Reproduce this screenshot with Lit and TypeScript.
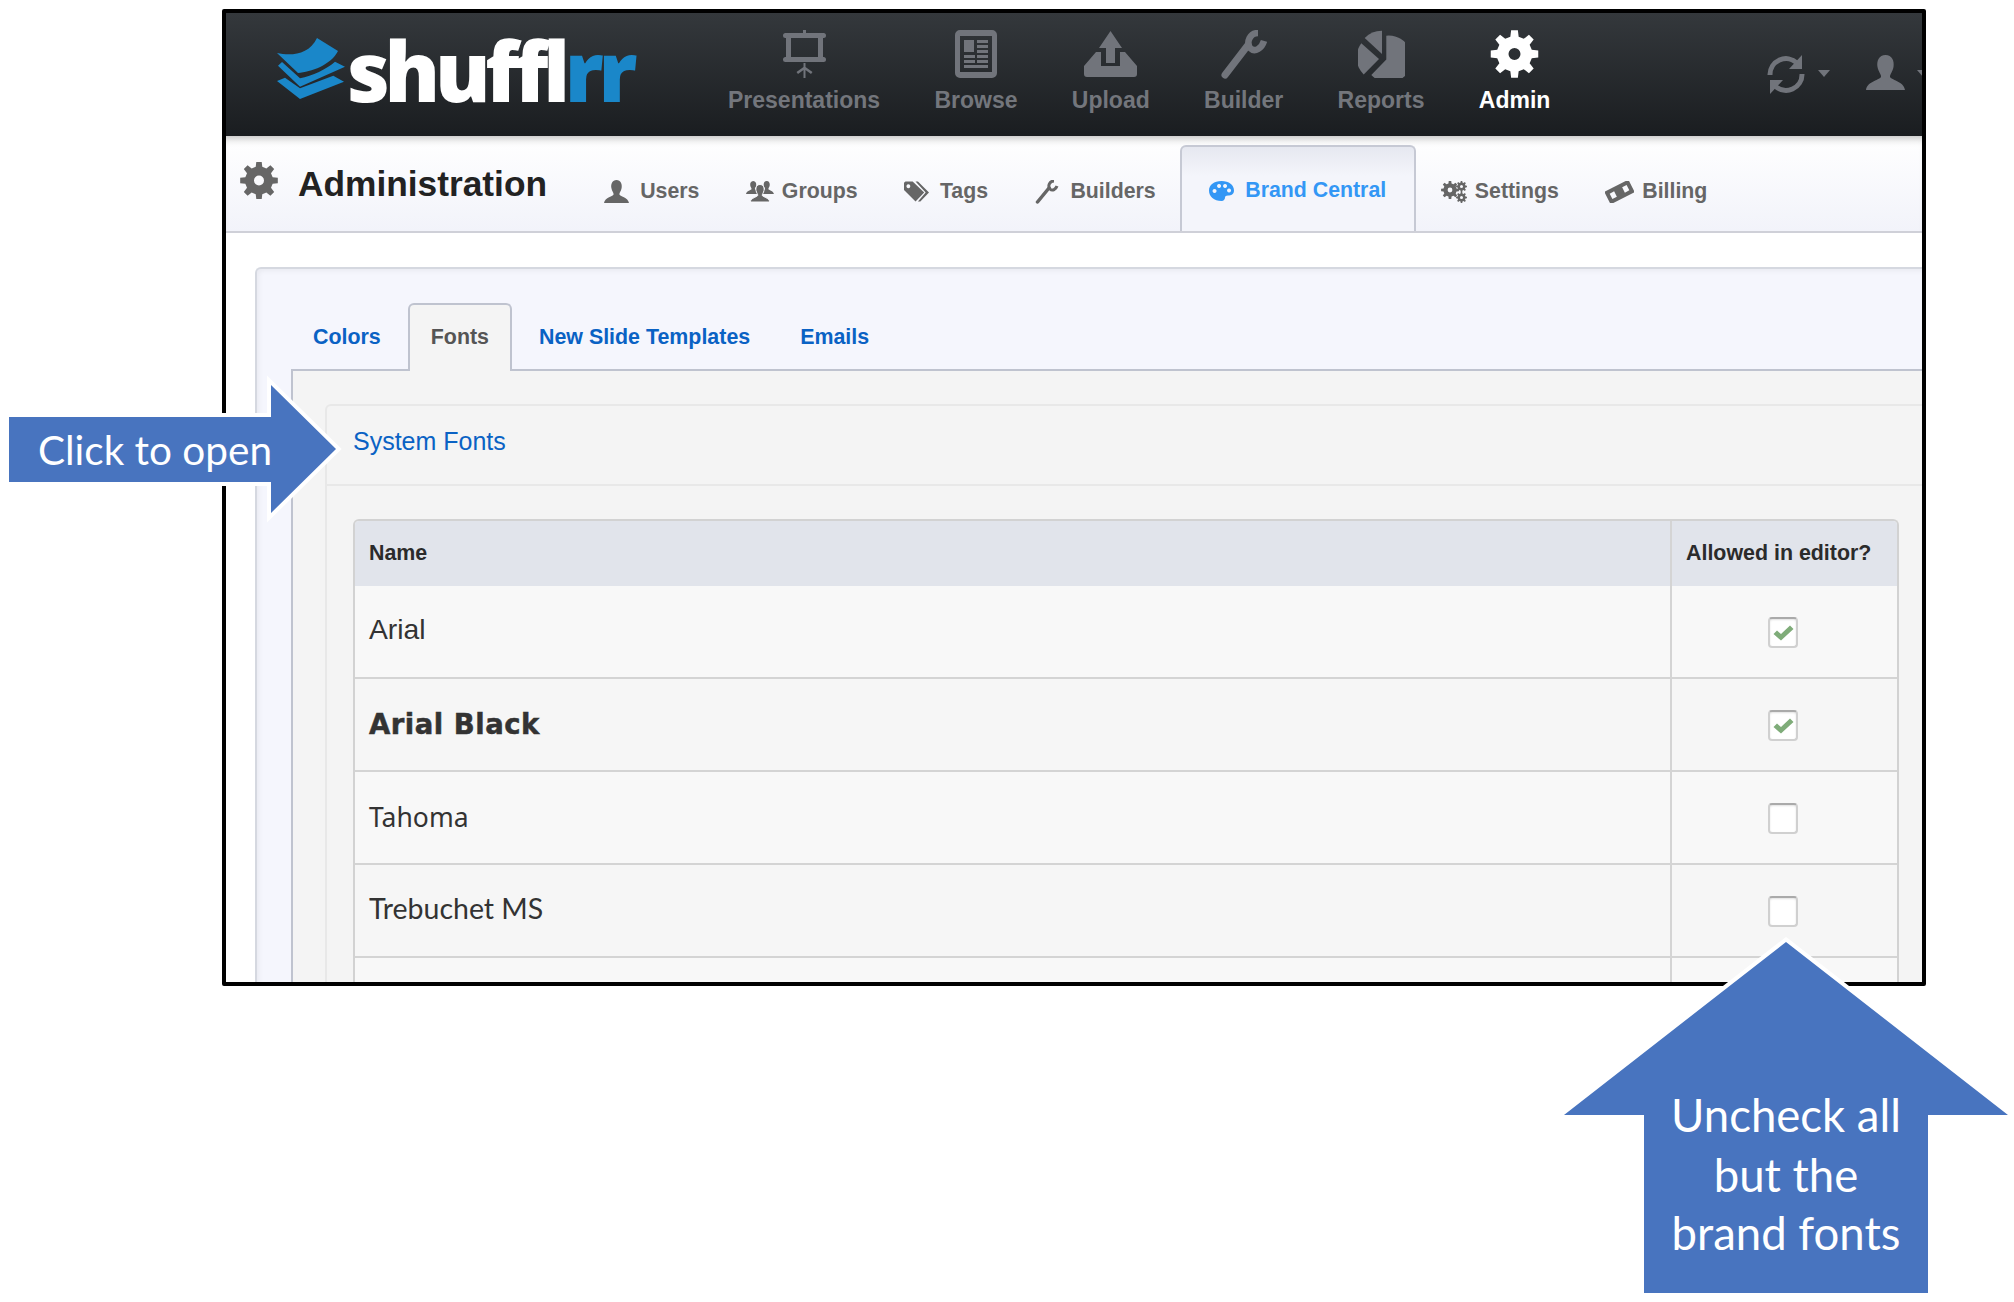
import { LitElement, html, css, svg } from "lit";
import { customElement } from "lit/decorators.js";

function gear(cx: number, cy: number, r: number, hole: number, teeth = 8): string {
  const out: string[] = [];
  const step = (Math.PI * 2) / teeth;
  const root = r * 0.74;
  for (let i = 0; i < teeth; i++) {
    const a = i * step - Math.PI / 2;
    const pts: [number, number][] = [
      [root, a - step * 0.3],
      [r, a - step * 0.18],
      [r, a + step * 0.18],
      [root, a + step * 0.3],
    ];
    for (const [rad, ang] of pts) {
      out.push(`${out.length ? "L" : "M"}${(cx + rad * Math.cos(ang)).toFixed(2)} ${(cy + rad * Math.sin(ang)).toFixed(2)}`);
    }
  }
  out.push("Z");
  out.push(`M${cx - hole} ${cy}a${hole} ${hole} 0 1 0 ${hole * 2} 0a${hole} ${hole} 0 1 0 ${-hole * 2} 0Z`);
  return out.join(" ");
}

const person = "M19.5 0C26 0 28.500 6 27.500 12C26.500 17 24 19 24 21.500C24 25 38 26 39 35H0C1 26 15 25 15 21.500C15 19 12.500 17 11.500 12C10.500 6 13 0 19.500 0Z";

const navIcons: Record<string, unknown> = {
  Presentations: html`<svg width="43" height="48" viewBox="0 0 43 48">
    <rect x="20" y="0" width="3" height="4"></rect>
    <rect x="0" y="3" width="43" height="5" rx="2.500"></rect>
    <path d="M3 7h5v23h27V7h5v23H3z"></path>
    <rect x="0" y="27" width="43" height="5" rx="2.500"></rect>
    <path d="M20.500 33h2l0 4 7 5-1.500 2-5.500-4V48h-2v-8l-5.500 4-1.500-2 7-5z"></path></svg>`,
  Browse: html`<svg width="42" height="48" viewBox="0 0 42 48">
    <path fill-rule="evenodd" d="M5 0h32a5 5 0 0 1 5 5v38a5 5 0 0 1-5 5H5a5 5 0 0 1-5-5V5a5 5 0 0 1 5-5zM5 6v36h32V6z"></path>
    <path d="M9 10h10v12H9zM22 10h11v3H22zM22 15h11v3H22zM22 20h11v3H22zM9 25h11v3H9zM22 25h11v3H22zM9 30h11v3H9zM22 30h11v3H22zM9 35h24v3H9z"></path></svg>`,
  Upload: html`<svg width="53" height="46" viewBox="0 0 53 46">
    <path d="M26.500 0L38 17h-7v15h-9V17h-7z"></path>
    <path d="M12 21h5v14h19V21h5l12 14v8a3 3 0 0 1-3 3H3a3 3 0 0 1-3-3v-8z"></path></svg>`,
  Builder: html`<svg width="47" height="49" viewBox="0 0 47 49">
    <path d="M5 45L28 15" fill="none" stroke="#71747b" stroke-width="7" stroke-linecap="round"></path>
    <path d="M38 3C30 3 26 12 30 18C35 23 42 18 44 11" fill="none" stroke="#71747b" stroke-width="6.500"></path></svg>`,
  Reports: html`<svg width="47" height="48" viewBox="0 0 47 48">
    <path d="M28.300 5.700A23.500 23.500 0 1 1 13.300 45L28.300 29.500z"></path>
    <path d="M24 .7V24L6.700 8A23.500 23.500 0 0 1 24 .7z"></path>
    <path d="M3.300 13.300L21 29 5.700 44.500A23.500 23.500 0 0 1 3.300 13.300z"></path></svg>`,
  Admin: html`<svg width="49" height="48" viewBox="0 0 49 48"><path fill-rule="evenodd" d="${gear(24.5, 24, 24, 6)}"></path></svg>`,
};

const nav = ["Presentations", "Browse", "Upload", "Builder", "Reports", "Admin"];

const subIcons: Record<string, unknown> = {
  Users: html`<svg width="25" height="23" viewBox="0 0 39 35" preserveAspectRatio="none"><path d="${person}"></path></svg>`,
  Groups: html`<svg class="tight" width="28" height="22" viewBox="0 0 56 44">
    <g transform="translate(0 0) scale(.74)"><path d="${person}"></path></g>
    <g transform="translate(27 0) scale(.74)"><path d="${person}"></path></g>
    <g transform="translate(8.500 7)" stroke="#f9f9fd" stroke-width="2"><path d="${person}"></path></g></svg>`,
  Tags: html`<svg width="25" height="22" viewBox="0 0 26 22">
    <path fill-rule="evenodd" d="M0 1.500L1.500 0H9L21 11.500 12 21 0 9zM4.500 3a2 2 0 1 0 .1 0z"></path>
    <path d="M12 0h2.500L26 11.500 17 21h-2.500l8-9.500z"></path></svg>`,
  Builders: html`<svg width="25" height="24" viewBox="0 0 23 24">
    <path d="M2.500 22L14 8" fill="none" stroke="#666" stroke-width="3.500" stroke-linecap="round"></path>
    <path d="M19 1C14.500 1 12.500 6 15 9C17.500 11.500 21 9 22 6" fill="none" stroke="#666" stroke-width="3"></path></svg>`,
  "Brand Central": html`<svg width="25" height="20" viewBox="0 0 25 20">
    <path fill-rule="evenodd" d="M12.500 0C20 0 25 4 25 9.500c0 4-3 5-6 5-2 0-3 .7-3 2 0 1.500-1 3.500-3.500 3.500C5 20 0 15.500 0 9.500 0 4 5 0 12.500 0zM5.500 8a2 2 0 1 0 .1 0zM10 3a2 2 0 1 0 .1 0zM16 3a2 2 0 1 0 .1 0zM20 7.500a2 2 0 1 0 .1 0z"></path></svg>`,
  Settings: html`<svg class="tight" width="26" height="22" viewBox="0 0 26 22">
    <path fill-rule="evenodd" d="${gear(9, 9, 9, 2.4)}"></path>
    <path fill-rule="evenodd" d="${gear(20.500, 5.500, 5.500, 1.5)}"></path>
    <path fill-rule="evenodd" d="${gear(20.500, 16.500, 5.500, 1.5)}"></path></svg>`,
  Billing: html`<svg class="tight" width="29" height="22" viewBox="0 0 29 22">
    <g transform="rotate(-27 14.500 11)"><path fill-rule="evenodd" d="M1 4h27v14H1zM5 8v6h5V8zM19 8v6h5V8z"></path></g></svg>`,
};

const subs = ["Users", "Groups", "Tags", "Builders", "Brand Central", "Settings", "Billing"];

const fonts: { name: string; cls: string; on: boolean }[] = [
  { name: "Arial", cls: "arial", on: true },
  { name: "Arial Black", cls: "black", on: true },
  { name: "Tahoma", cls: "tahoma", on: false },
  { name: "Trebuchet MS", cls: "trebuchet", on: false },
  { name: "", cls: "arial", on: false },
];

@customElement("app-root")
export class AppRoot extends LitElement {
  static styles = css`
    :host {
      display: block;
      position: relative;
      width: 2014px;
      height: 1302px;
      background: #fff;
      overflow: hidden;
      font-family: "Liberation Sans", Arial, sans-serif;
      padding: 9px 0 0 222px;
      box-sizing: border-box;
    }
    .frame {
      width: 1704px;
      height: 977px;
      box-sizing: border-box;
      border: 4px solid #000;
      border-radius: 2px;
      overflow: hidden;
      background: #fff;
    }
    .top {
      display: flex;
      height: 123px;
      background: linear-gradient(#34383c, #1a1d20);
      padding-left: 51px;
      box-sizing: border-box;
    }
    .logo {
      display: flex;
      width: 358px;
      margin-right: 93px;
      flex: none;
      align-items: flex-start;
      padding-top: 25px;
      box-sizing: border-box;
    }
    .logo svg { flex: none; margin-right: 2px; }
    .word {
      font-family: "Open Sans", sans-serif;
      font-weight: 800;
      font-size: 83px;
      line-height: 64px;
      letter-spacing: -5.300px;
      color: #fff;
    }
    .word b { font-weight: 800; color: #1a87c9; }
    .nav { display: flex; gap: 54.300px; flex: none; }
    .nav-item {
      display: flex;
      flex-direction: column;
      align-items: center;
      padding-top: 16px;
      color: #73767c;
      font-weight: 700;
      font-size: 23px;
      line-height: 24px;
    }
    .nav-item svg { fill: #71747b; }
    .nav-icon { height: 50px; margin-bottom: 9px; display: flex; align-items: center; }
    .nav-item.on { color: #fff; }
    .nav-item.on svg { fill: #fff; }
    .tools {
      display: flex;
      flex: none;
      margin-left: 216px;
      padding-top: 42px;
      align-items: flex-start;
    }
    .tools svg { fill: #71747b; flex: none; }
    .caret {
      width: 0;
      height: 0;
      flex: none;
      border: 6.500px solid transparent;
      border-top: 7px solid #71747b;
      border-bottom: 0;
      margin: 15px 0 0 12px;
    }
    .tools .who { margin-left: 36px; }
    .sub {
      display: flex;
      height: 97px;
      box-sizing: border-box;
      background: linear-gradient(#fff, #f2f3fa);
      border-bottom: 2px solid #cfd0d8;
      box-shadow: inset 0 8px 8px -6px rgba(0, 0, 0, .28);
      padding-left: 14px;
    }
    .sub .cog { fill: #666; margin-top: 26px; flex: none; }
    .title {
      font-weight: 700;
      font-size: 35.300px;
      line-height: 40px;
      color: #222;
      margin: 28px 34px 0 20px;
      flex: none;
    }
    .sub-item {
      display: flex;
      align-items: center;
      gap: 11px;
      padding: 7px 23.200px 0;
      margin-top: 9px;
      font-weight: 700;
      font-size: 21.300px;
      color: #666;
      flex: none;
    }
    .sub-item svg { fill: #666; flex: none; }
    .sub-item svg.tight { margin-right: -3px; }
    .sub-item.on {
      color: #3397f5;
      padding: 3px 27.500px 0;
      margin: 9px 2px 0 1px;
      height: 86px;
      box-sizing: border-box;
      border: 2px solid #c6c9d4;
      border-bottom: 0;
      border-radius: 6px 6px 0 0;
      background: linear-gradient(#e6e8f0, #f4f5fb 35%);
    }
    .sub-item.on svg { fill: #3397f5; }
    .main { padding: 34px 0 0 29px; }
    .panel {
      border: 2px solid #d5d8e0;
      border-right: 0;
      border-bottom: 0;
      border-radius: 6px 0 0 0;
      background: #f5f6fd;
      box-shadow: inset 2px 2px 5px rgba(0, 0, 0, .05);
      padding: 34px 0 0 34px;
      height: 760px;
      box-sizing: border-box;
    }
    .tabs { display: flex; height: 66px; margin-left: -1px; }
    .tab {
      display: flex;
      align-items: center;
      padding: 0 21px 0;
      margin: 0 4px 0 0;
      height: 66px;
      border: 2px solid transparent;
      border-bottom: 0;
      box-sizing: border-box;
      font-weight: 700;
      font-size: 21.400px;
      color: #0a62c4;
    }
    .tab.on {
      color: #555;
      background: #f4f4f4;
      border-color: #bfc3cf;
      border-radius: 6px 6px 0 0;
      position: relative;
      z-index: 1;
      height: 68px;
      padding-bottom: 2px;
    }
    .pane {
      border-top: 2px solid #bfc3cf;
      border-left: 2px solid #bfc3cf;
      background: #f4f4f4;
      padding: 33px 0 0 32px;
      height: 640px;
      box-sizing: border-box;
    }
    .box {
      border: 2px solid #e8e8e8;
      border-right: 0;
      border-radius: 6px 0 0 0;
      padding-bottom: 40px;
    }
    .box-head {
      height: 70px;
      display: flex;
      align-items: center;
      padding: 0 0 8px 26px;
      border-bottom: 2px solid #e8e8e8;
      font-size: 25px;
      color: #0a62c4;
      box-sizing: content-box;
    }
    .grid {
      margin: 33px 23px 0 26px;
      border: 2px solid #d2d2d2;
      border-bottom: 0;
      border-radius: 6px 6px 0 0;
      overflow: hidden;
    }
    .row {
      display: grid;
      grid-template-columns: 1fr 227px;
      height: 93px;
      box-sizing: border-box;
      border-bottom: 2px solid #d4d4d4;
      background: #f8f8f8;
      color: #333;
    }
    .row.even { background: #f6f6f6; }
    .row.head {
      height: 65px;
      background: #e1e4eb;
      border-bottom: 0;
      font-weight: 700;
      font-size: 21.400px;
      color: #2b2b2b;
    }
    .c1 { display: flex; align-items: center; padding: 0 0 4px 14px; }
    .head .c1 { padding-bottom: 1px; }
    .c2 {
      display: flex;
      align-items: center;
      justify-content: center;
      border-left: 2px solid #d4d4d4;
      padding: 2px 4px 0 0;
    }
    .head .c2 { padding: 0 0 1px 14px; justify-content: flex-start; }
    .arial { font-size: 28.300px; }
    .black { font-family: "DejaVu Sans", sans-serif; font-weight: 700; font-size: 27.500px; letter-spacing: .5px; -webkit-text-stroke: .5px #333; transform: translateY(1px); }
    .tahoma { font-family: "Noto Sans", sans-serif; font-size: 26.500px; transform: translateY(1px); }
    .trebuchet { font-family: "Lato", sans-serif; font-size: 28.500px; transform: translateY(-1px); }
    .check {
      width: 30px;
      height: 31px;
      box-sizing: border-box;
      background: #fff;
      border: 2px solid #d0d0d0;
      border-top-color: #aaa;
      border-radius: 4px;
      box-shadow: inset 0 1px 2px rgba(0, 0, 0, .12);
      display: flex;
      align-items: center;
      justify-content: center;
    }
    .overlay { position: absolute; left: 0; top: 0; pointer-events: none; }
    .overlay polygon { fill: #4874bf; stroke: #fff; stroke-width: 8; paint-order: stroke; stroke-linejoin: miter; }
    .overlay text { font-family: "Lato", sans-serif; fill: #fff; }
  `;

  render() {
    return html`
      <div class="frame">
        <div class="top">
          <div class="logo">
            <svg width="68" height="62" viewBox="0 0 68 62" fill="#1a87c9">
              <path d="M0 15C14 18 32 17 40 0L61 13C54 27 34 34 21 35Z"></path>
              <path d="M1 27.700L5 24 23 40.300C35 38 50 31 58 23.700L68 28.700L23 48.700Z"></path>
              <path d="M0 43L8 39.700L23 50.300L56.300 37.700L67 43.700L23 61Z"></path>
            </svg>
            <span class="word">shuffl<b>rr</b></span>
          </div>
          <div class="nav">
            ${nav.map(
              (n) => html`<div class="nav-item ${n === "Admin" ? "on" : ""}">
                <span class="nav-icon">${navIcons[n]}</span>${n}
              </div>`
            )}
          </div>
          <div class="tools">
            <svg width="40" height="39" viewBox="0 0 40 39">
              <path d="M4 20A16 16 0 0 1 31 8M36 19A16 16 0 0 1 9 31" fill="none" stroke="#71747b" stroke-width="5"></path>
              <path d="M36 0V14H23zM4 39V25H17z"></path>
            </svg>
            <span class="caret"></span>
            <svg class="who" width="39" height="35" viewBox="0 0 39 35"><path d="${person}"></path></svg>
            <span class="caret"></span>
          </div>
        </div>
        <div class="sub">
          <svg class="cog" width="38" height="37" viewBox="0 0 38 37"><path fill-rule="evenodd" d="${gear(19, 18.5, 19, 5)}"></path></svg>
          <div class="title">Administration</div>
          ${subs.map(
            (s) => html`<div class="sub-item ${s === "Brand Central" ? "on" : ""}">${subIcons[s]}<span>${s}</span></div>`
          )}
        </div>
        <div class="main">
          <div class="panel">
            <div class="tabs">
              <div class="tab">Colors</div>
              <div class="tab on">Fonts</div>
              <div class="tab">New Slide Templates</div>
              <div class="tab">Emails</div>
            </div>
            <div class="pane">
              <div class="box">
                <div class="box-head">System Fonts</div>
                <div class="grid">
                  <div class="row head">
                    <div class="c1">Name</div>
                    <div class="c2">Allowed in editor?</div>
                  </div>
                  ${fonts.map(
                    (f, i) => html`<div class="row ${i % 2 ? "even" : ""}">
                      <div class="c1"><span class="${f.cls}">${f.name}</span></div>
                      <div class="c2">
                        <span class="check">
                          ${f.on
                            ? html`<svg width="22" height="18" viewBox="0 0 22 18"><path d="M1.500 10l3.500-3.500 4 3.500L18 1.500l3.500 3.500L9 16.500z" fill="#7fac79"></path></svg>`
                            : ""}
                        </span>
                      </div>
                    </div>`
                  )}
                </div>
              </div>
            </div>
          </div>
        </div>
      </div>
      <svg class="overlay" width="2014" height="1302" viewBox="0 0 2014 1302">
        ${svg`
          <polygon points="9,417 271,417 271,385 336,449 271,513 271,482 9,482"></polygon>
          <text x="38" y="465" font-size="40.500">Click to open</text>
          <polygon points="1786,942 2008,1115 1928,1115 1928,1293 1644,1293 1644,1115 1564,1115"></polygon>
          <text x="1786" y="1132" font-size="45.500" text-anchor="middle">Uncheck all</text>
          <text x="1786" y="1192" font-size="45.500" text-anchor="middle">but the</text>
          <text x="1786" y="1250" font-size="45.500" text-anchor="middle">brand fonts</text>
        `}
      </svg>
    `;
  }
}
